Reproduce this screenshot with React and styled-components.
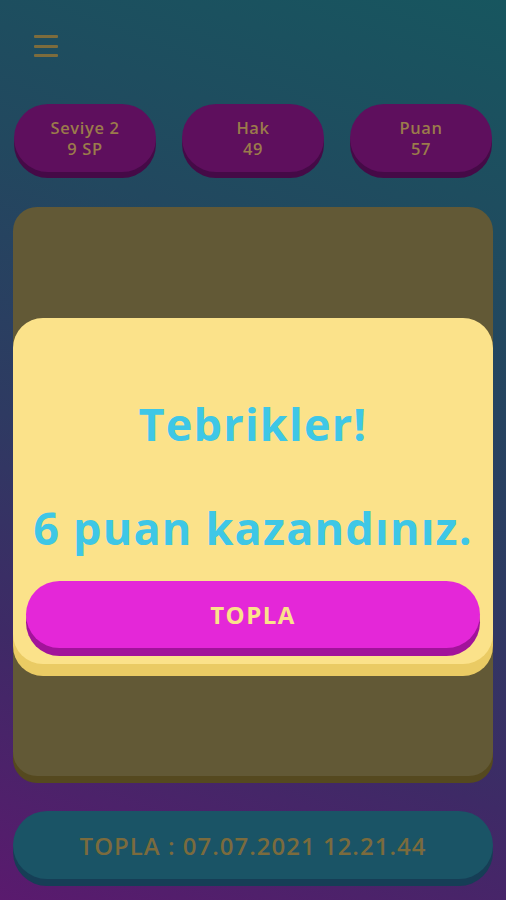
import React from "react";
import styled, { createGlobalStyle } from "styled-components";

const GlobalStyle = createGlobalStyle`
  * { box-sizing: border-box; }
  html, body {
    margin: 0;
    padding: 0;
    height: 100%;
  }
  body {
    font-family: "Open Sans", "Noto Sans", sans-serif;
    background: #2a2f5c;
  }
`;

const Screen = styled.div`
  position: relative;
  width: 506px;
  height: 900px;
  overflow: hidden;
  background: linear-gradient(200deg, #17565f 0%, #22485f 30%, #2e3a62 55%, #3e2a66 75%, #5a1a6e 100%);
  padding: 0 13px;
  display: flex;
  flex-direction: column;
`;

const TopBar = styled.div`
  height: 104px;
  padding: 35px 0 0 21px;
`;

const MenuButton = styled.button`
  width: 24px;
  height: 22px;
  padding: 0;
  border: 0;
  background: transparent;
  display: flex;
  flex-direction: column;
  justify-content: space-between;
  cursor: pointer;

  span {
    display: block;
    height: 3px;
    border-radius: 1px;
    background: #7d6c3c;
  }
`;

const StatsRow = styled.div`
  display: flex;
  justify-content: space-between;
  padding: 0 1px;
`;

const StatPill = styled.div`
  width: 142px;
  height: 68px;
  border-radius: 34px;
  background: #5e0f5d;
  box-shadow: 0 6px 0 #450a47;
  display: flex;
  flex-direction: column;
  align-items: center;
  justify-content: center;
  color: #9b7b4b;
  font-weight: 600;
  font-size: 16.5px;
  line-height: 21px;
  letter-spacing: 0.6px;
`;

const Board = styled.div`
  position: relative;
  margin: 35px 0 0;
  height: 569px;
  border-radius: 24px;
  background: #625936;
  box-shadow: 0 7px 0 #55491f;
`;

const Modal = styled.div`
  position: absolute;
  left: 0;
  right: 0;
  top: 111px;
  height: 346px;
  border-radius: 30px;
  background: #fbe28a;
  box-shadow: 0 12px 0 #eacb64;
  display: flex;
  flex-direction: column;
  align-items: center;
  padding: 76px 13px 0;
`;

const Message = styled.div`
  color: #3ec7e6;
  font-weight: 700;
  font-size: 45px;
  line-height: 60px;
  letter-spacing: 1.2px;
  text-align: center;
  margin-bottom: ${(p) => p.gap || 0}px;
`;

const CollectButton = styled.button`
  margin-top: 23px;
  width: 100%;
  height: 67px;
  border: 0;
  border-radius: 34px;
  background: #e427d8;
  box-shadow: 0 8px 0 #a2139b;
  color: #fbe28a;
  font-family: inherit;
  font-weight: 700;
  font-size: 24px;
  letter-spacing: 1.5px;
  cursor: pointer;
`;

const TimerPill = styled.div`
  margin: 35px 0 0;
  height: 68px;
  border-radius: 34px;
  background: #1a5466;
  box-shadow: 0 7px 0 #163e56;
  display: flex;
  align-items: center;
  justify-content: center;
  color: #7b6b3d;
  font-weight: 600;
  font-size: 24px;
  letter-spacing: 1px;
`;

const stats = [
  { label: "Seviye 2", value: "9 SP" },
  { label: "Hak", value: "49" },
  { label: "Puan", value: "57" },
];

export default function App() {
  return (
    <>
      <GlobalStyle />
      <Screen>
        <TopBar>
          <MenuButton aria-label="menu">
            <span />
            <span />
            <span />
          </MenuButton>
        </TopBar>
        <StatsRow>
          {stats.map((s) => (
            <StatPill key={s.label}>
              <div>{s.label}</div>
              <div>{s.value}</div>
            </StatPill>
          ))}
        </StatsRow>
        <Board>
          <Modal>
            <Message gap={44}>Tebrikler!</Message>
            <Message>6 puan kazandınız.</Message>
            <CollectButton>TOPLA</CollectButton>
          </Modal>
        </Board>
        <TimerPill>TOPLA : 07.07.2021 12.21.44</TimerPill>
      </Screen>
    </>
  );
}
